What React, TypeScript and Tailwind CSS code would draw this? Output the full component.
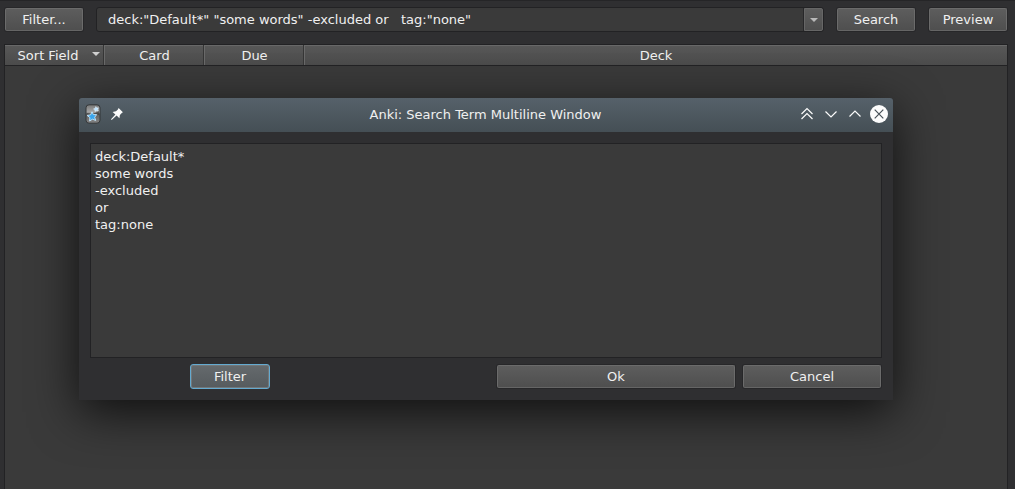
import type { ReactNode } from "react";

const buttonBase =
  "flex h-[23px] shrink-0 items-center justify-center rounded-[2px] border border-[#6b6b6b] border-b-[#656565] bg-linear-to-b from-[#5d5d5d] to-[#4f4f4f] shadow-[0_0_0_1px_#272729]";

function Button({ className, children }: { className: string; children: ReactNode }) {
  return (
    <button type="button" className={`${buttonBase} ${className}`}>
      {children}
    </button>
  );
}

function AppIcon() {
  return (
    <svg width="16" height="20" viewBox="0 0 16 20" className="shrink-0">
      <defs>
        <linearGradient id="card" x1="0" y1="0" x2="0" y2="1">
          <stop offset="0" stopColor="#777777" />
          <stop offset="0.4" stopColor="#a8a8a8" />
          <stop offset="0.5" stopColor="#606060" />
          <stop offset="1" stopColor="#858585" />
        </linearGradient>
      </defs>
      <rect x="1" y="0.8" width="14" height="18.4" rx="3" fill="url(#card)" stroke="#333638" strokeWidth="1" />
      <path d="M2 9 Q8 11 14 7 V11 Q10 10 7 11 L2 10Z" fill="#3b3b3b" opacity="0.7" />
      <path d="M10.8 2.6 L11.8 4 L13.4 3.8 L12.6 5.4 L13.2 6.9 L11.5 6.5 L10 7.5 L9.8 5.8 L8.5 5 L10.2 4.3Z" fill="#bfe3ff" stroke="#e2f2fd" strokeWidth="0.5" />
      <path d="M7 7.8 L8.4 10.6 L11.7 10.6 L9.7 13.2 L10.7 16.5 L7.5 15.2 L4.6 17 L4.9 13.6 L2.2 11.5 L5.6 10.8Z" fill="#3aa5ec" stroke="#cde9fb" strokeWidth="0.9" />
    </svg>
  );
}

function PinIcon() {
  return (
    <svg width="12" height="12" viewBox="0 0 12 12" className="shrink-0" fill="#fcfcfc">
      <path d="M7.6 0 L11.9 4.2 L10.8 5.1 L8.9 7 L8.4 10.2 L5.6 7.6 L0.7 12 L0 11.3 L4.4 6.5 L1.6 3.9 L5 3.2 L6.9 1.4Z" />
    </svg>
  );
}

function WindowControls() {
  return (
    <svg width="92" height="20" viewBox="0 0 92 20" fill="none" stroke="#fcfcfc" strokeWidth="1.2" className="shrink-0">
      <path d="M4.5 10 L10 4.5 L15.5 10 M4.5 15 L10 9.5 L15.5 15" />
      <path d="M28.5 7.5 L34 13 L39.5 7.5" />
      <path d="M52.5 12.5 L58 7 L63.5 12.5" />
      <circle cx="82" cy="10" r="9" fill="#fcfcfc" stroke="none" />
      <path d="M77.7 5.7 L86.3 14.3 M86.3 5.7 L77.7 14.3" stroke="#465057" />
    </svg>
  );
}

function DownArrow({ color }: { color: string }) {
  return (
    <svg width="8" height="4" viewBox="0 0 8 4" className="shrink-0">
      <path d="M0 0 H8 L4 4Z" fill={color} />
    </svg>
  );
}

const headerCell = "flex items-center justify-center border-r border-r-[#363636] shadow-[1px_0_0_#6a6a6a]";

function Dialog() {
  return (
    <section className="absolute left-[79px] top-[98px] flex h-[302px] w-[814px] flex-col rounded-t-[3px] bg-[#2f2f31] shadow-[0_12px_48px_rgba(0,0,0,0.75)]">
      <header className="grid h-[34px] shrink-0 grid-cols-[96px_1fr_96px] items-center rounded-t-[3px] bg-linear-to-b from-[#56616a] to-[#454f55] pb-[2px]">
        <div className="flex items-center gap-[10px] pl-[6px]">
          <AppIcon />
          <PinIcon />
        </div>
        <h1 className="-ml-px text-center">Anki: Search Term Multiline Window</h1>
        <WindowControls />
      </header>
      <div className="mx-[11px] mt-[11px] h-[215px] w-[792px] shrink-0 whitespace-pre-line border border-[#222224] bg-[#3a3a3a] px-1 py-1 leading-[17px]">
        {"deck:Default*\nsome words\n-excluded\nor\ntag:none"}
      </div>
      <div className="mt-[6px] flex items-center pl-[111px]">
        <button
          type="button"
          className="flex h-[25px] w-20 items-center justify-center rounded-[3px] border border-[#64aad0] bg-linear-to-b from-[#656a6d] to-[#565b5e] shadow-[inset_0_0_0_1px_#737779]"
        >
          Filter
        </button>
        <Button className="ml-[227px] w-[238px]">Ok</Button>
        <Button className="ml-2 w-[138px]">Cancel</Button>
      </div>
    </section>
  );
}

export default function App() {
  return (
    <main className="relative flex h-[489px] w-[1015px] flex-col overflow-hidden bg-[#2f2f31] font-['DejaVu_Sans',sans-serif] text-[13px] leading-[17px] text-[#f0f0f0]">
      <div className="flex h-[44px] shrink-0 items-start border-t border-[#252527] pl-[5px] pt-[7px]">
        <Button className="w-[78px]">Filter...</Button>
        <div className="-mt-px ml-[13px] flex h-[25px] w-[728px] rounded-[3px] border border-[#222224] bg-[#3a3a3a]">
          <div className="flex flex-1 items-center whitespace-pre pl-[11px]">
            {'deck:"Default*" "some words" -excluded or   tag:"none"'}
          </div>
          <div className="flex w-[19px] items-center justify-center rounded-r-[2px] border border-[#666666] bg-linear-to-b from-[#5d5d5d] to-[#4f4f4f] shadow-[-1px_0_0_#272729]">
            <DownArrow color="#b9b9b9" />
          </div>
        </div>
        <Button className="ml-[13px] w-[78px]">Search</Button>
        <Button className="ml-[14px] w-[78px]">Preview</Button>
      </div>
      <div className="ml-1 flex w-[1004px] flex-1 flex-col border-x border-t border-[#222224] bg-[#3a3a3a]">
        <div className="grid h-[21px] shrink-0 grid-cols-[99px_100px_100px_1fr] border-b border-b-[#222224] bg-linear-to-b from-[#585858] to-[#4b4b4b] shadow-[inset_0_1px_0_#686868]">
          <div className={`${headerCell} relative pr-3`}>
            Sort Field
            <span className="absolute right-[3px] top-[7px]">
              <DownArrow color="#d0d0d0" />
            </span>
          </div>
          <div className={`${headerCell} pl-[2px]`}>Card</div>
          <div className={`${headerCell} pl-[2px]`}>Due</div>
          <div className="flex items-center justify-center pl-px">Deck</div>
        </div>
        <div className="flex-1" />
      </div>
      <Dialog />
    </main>
  );
}
